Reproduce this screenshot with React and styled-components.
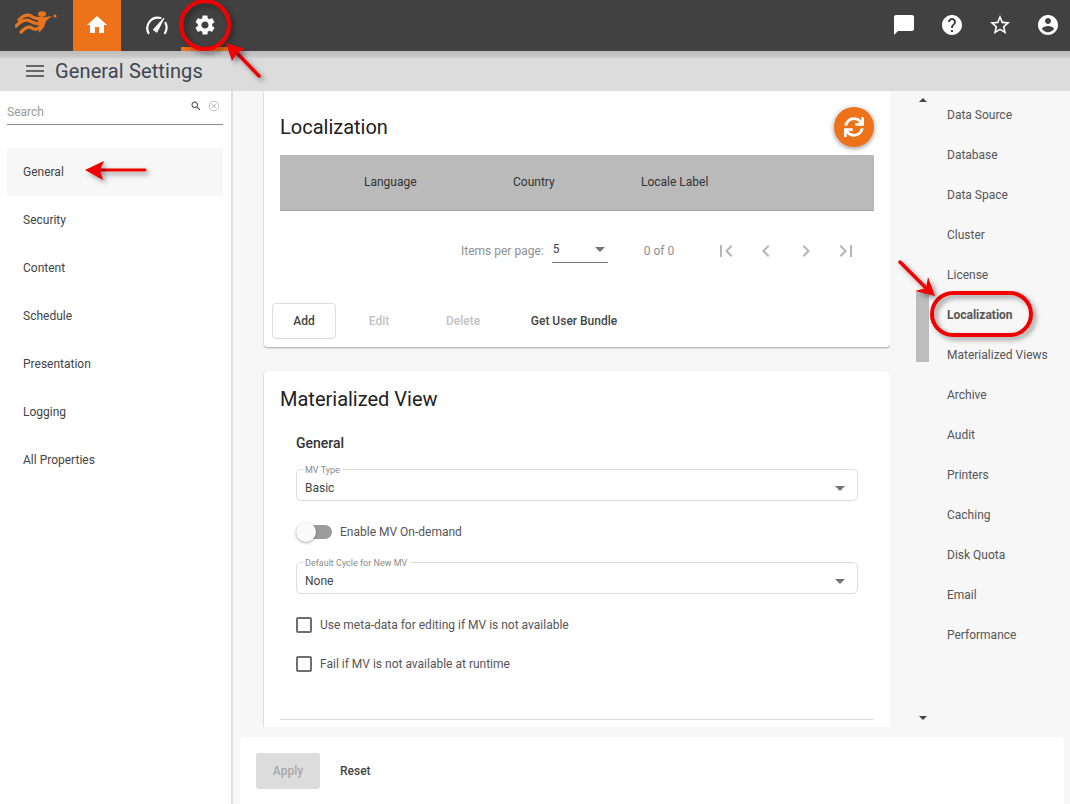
import React from 'react'
import styled, { createGlobalStyle } from 'styled-components'
import { FaSync } from 'react-icons/fa'

const GlobalStyle = createGlobalStyle`
  html, body {
    margin: 0;
    padding: 0;
    height: 100%;
    overflow: hidden;
    background: #f7f7f7;
    font-family: Roboto, "Liberation Sans", sans-serif;
  }
`

const Page = styled.div`
  position: relative;
  width: 1070px;
  height: 804px;
  display: flex;
  flex-direction: column;
  overflow: hidden;
`

const Header = styled.header`
  height: 51px;
  flex: none;
  background: #414141;
  display: flex;
  align-items: stretch;
`

const Logo = styled.div`
  width: 73px;
  display: flex;
  align-items: center;
  padding-left: 15px;
  box-sizing: border-box;
`

const Tab = styled.div`
  width: 48px;
  display: flex;
  align-items: center;
  justify-content: center;
  background: ${p => (p.$active ? '#ee7219' : 'transparent')};
  border-bottom: ${p => (p.$underline ? '4px solid #ee7219' : 'none')};
  box-sizing: border-box;
  padding-top: ${p => (p.$underline ? '3px' : '0')};
  padding-bottom: ${p => (p.$underline ? '0' : '1px')};
  margin-left: ${p => p.$gap || 0}px;
`

const HeaderRight = styled.div`
  margin-left: auto;
  margin-right: -2px;
  display: flex;
  align-items: center;
`

const HeaderIcon = styled.div`
  width: 48px;
  height: 48px;
  display: flex;
  align-items: center;
  justify-content: center;
  margin-top: -1px;
`

const TitleBar = styled.div`
  height: 40px;
  flex: none;
  background: linear-gradient(#bcbcbc, #c6c6c6 5px, #d2d2d2 7px, #dcdcdc 8px);
  display: flex;
  align-items: center;
  padding-left: 23px;
  gap: 8px;
`

const Title = styled.h1`
  margin: 0;
  font-size: 20px;
  font-weight: 400;
  letter-spacing: 0.12px;
  color: #3f4650;
`

const Body = styled.div`
  flex: 1;
  min-height: 0;
  display: flex;
`

const Sidebar = styled.aside`
  width: 233px;
  flex: none;
  box-sizing: border-box;
  background: #fff;
  border-right: 2px solid #e0e0e0;
  padding: 0 8px 0 7px;
`

const SearchBox = styled.div`
  height: 34px;
  box-sizing: border-box;
  border-bottom: 1px solid #8c8c8c;
  display: flex;
  align-items: flex-start;
`

const SearchText = styled.span`
  font-size: 12px;
  color: #9a9a9a;
  margin-top: 14px;
  flex: 1;
`

const SearchIcons = styled.div`
  display: flex;
  align-items: center;
  gap: 6px;
  margin-top: 9px;
  margin-right: 3px;
`

const SideList = styled.div`
  margin-top: 23px;
`

const SideItem = styled.div`
  height: 48px;
  display: flex;
  align-items: center;
  padding-left: 16px;
  font-size: 12px;
  color: #444;
  background: ${p => (p.$active ? '#f7f7f7' : 'transparent')};
`

const Content = styled.div`
  flex: 1;
  min-width: 0;
  display: flex;
  flex-direction: column;
`

const TopRow = styled.div`
  height: 646px;
  flex: none;
  display: flex;
`

const Cards = styled.div`
  width: 657px;
  flex: none;
  box-sizing: border-box;
  padding-left: 31px;
  height: 636px;
  overflow: hidden;
`

const Card = styled.section`
  background: #fff;
  border-radius: ${p => (p.$round ? '4px' : '0 0 4px 4px')};
  box-shadow: 0 1px 2px rgba(0, 0, 0, 0.35);
  padding: 0 16px;
  margin-bottom: 24px;
  height: ${p => p.$height}px;
  box-sizing: border-box;
`

const CardHead = styled.div`
  height: ${p => p.$height}px;
  box-sizing: border-box;
  padding-top: ${p => p.$top || 0}px;
  display: flex;
  align-items: center;
  justify-content: space-between;
`

const CardTitle = styled.h2`
  margin: 0;
  font-size: 20px;
  font-weight: 400;
  color: #212121;
`

const Fab = styled.div`
  width: 40px;
  height: 40px;
  border-radius: 50%;
  background: #ee7219;
  color: #fff;
  display: flex;
  align-items: center;
  justify-content: center;
  box-shadow: 0 0 0 3px rgba(0, 0, 0, 0.04), 0 2px 5px rgba(0, 0, 0, 0.3);
`

const TableHead = styled.div`
  height: 56px;
  box-sizing: border-box;
  background: #bababa;
  border-bottom: 1px solid #a3a3a3;
  padding-bottom: 2px;
  display: grid;
  grid-template-columns: 84px 149px 128px 1fr;
  align-items: center;
  font-size: 12px;
  color: #333;
`

const Pager = styled.div`
  height: 80px;
  display: flex;
  align-items: center;
  font-size: 12px;
  color: #8f8f8f;
  padding-left: 181px;
`

const PageSelect = styled.div`
  width: 56px;
  height: 24px;
  margin-left: 8px;
  box-sizing: border-box;
  border-bottom: 1px solid #757575;
  display: flex;
  align-items: center;
  justify-content: space-between;
  color: #444;
  padding: 0 0 3px 1px;
`

const Caret = styled.span`
  width: 0;
  height: 0;
  border-left: 5px solid transparent;
  border-right: 5px solid transparent;
  border-top: 5px solid #757575;
  margin-right: ${p => p.$right || 0}px;
`

const Range = styled.span`
  margin-left: 36px;
  margin-right: 32px;
`

const PageButton = styled.div`
  width: 40px;
  height: 40px;
  display: flex;
  align-items: center;
  justify-content: center;
`

const ButtonRow = styled.div`
  display: flex;
  align-items: center;
  margin: 12px 0 0 -8px;
`

const TextButton = styled.div`
  height: 36px;
  box-sizing: border-box;
  display: flex;
  align-items: center;
  justify-content: center;
  font-size: 12px;
  font-weight: 500;
  width: ${p => p.$width}px;
  color: ${p => (p.$disabled ? '#c2c2c2' : '#444')};
  border: ${p => (p.$outlined ? '1px solid #dcdcdc' : 'none')};
  border-radius: 4px;
`

const Section = styled.div`
  padding: 8px 16px 0;
`

const SectionTitle = styled.h3`
  margin: 0;
  font-size: 14px;
  font-weight: 500;
  color: #333;
  line-height: 16px;
`

const Field = styled.div`
  position: relative;
  height: 32px;
  box-sizing: border-box;
  margin-top: ${p => p.$top}px;
  border: 1px solid #dcdcdc;
  border-radius: 5px;
  display: flex;
  align-items: center;
  justify-content: space-between;
  padding: 6px 12px 0 8px;
  font-size: 12px;
  color: #444;
`

const FieldLabel = styled.span`
  position: absolute;
  left: 6px;
  top: -5px;
  padding: 0 3px 0 2px;
  background: #fff;
  font-size: 9px;
  line-height: 10px;
  color: #8a8a8a;
`

const SwitchRow = styled.div`
  display: flex;
  align-items: center;
  margin-top: 20px;
  height: 22px;
  font-size: 12px;
  color: #555;
  gap: 8px;
`

const SwitchTrack = styled.span`
  position: relative;
  width: 36px;
  height: 14px;
  border-radius: 7px;
  background: #9b9b9b;
  display: block;
`

const SwitchKnob = styled.span`
  position: absolute;
  left: 0;
  top: -3px;
  width: 20px;
  height: 20px;
  border-radius: 50%;
  background: #fafafa;
  box-shadow: 0 1px 3px rgba(0, 0, 0, 0.35);
`

const CheckRow = styled.div`
  display: flex;
  align-items: center;
  gap: 8px;
  height: 20px;
  margin-top: ${p => p.$top}px;
  font-size: 12px;
  color: #555;
`

const CheckBox = styled.span`
  width: 16px;
  height: 16px;
  box-sizing: border-box;
  border: 2px solid #6e6e6e;
  border-radius: 2px;
  display: block;
`

const Divider = styled.div`
  height: 1px;
  background: #dcdcdc;
  margin-top: 45px;
`

const RightNav = styled.nav`
  flex: 1;
  display: flex;
`

const Track = styled.div`
  width: 13px;
  margin-left: 26px;
  display: flex;
  flex-direction: column;
  align-items: center;
  position: relative;
`

const Thumb = styled.div`
  width: 13px;
  height: 70px;
  background: #bdbdbd;
  margin-top: 201px;
`

const Arrow = styled.span`
  position: absolute;
  left: 3px;
  top: ${p => p.$top}px;
  width: 0;
  height: 0;
  border-left: 4px solid transparent;
  border-right: 4px solid transparent;
  ${p => (p.$up ? 'border-bottom: 4px solid #444;' : 'border-top: 4px solid #444;')}
`

const NavList = styled.div`
  margin: 4px 0 0 18px;
`

const NavItem = styled.div`
  height: 40px;
  display: flex;
  align-items: center;
  font-size: 12px;
  color: #555;
  font-weight: ${p => (p.$active ? 700 : 400)};
  white-space: nowrap;
`

const Footer = styled.footer`
  height: 67px;
  flex: none;
  background: #fff;
  margin: 0 6px 0 7px;
  border-radius: 4px 4px 0 0;
  display: flex;
  align-items: center;
  padding-left: 16px;
  gap: 20px;
`

const ApplyButton = styled.div`
  width: 64px;
  height: 36px;
  border-radius: 3px;
  background: #dcdcdc;
  color: #a8a8a8;
  font-size: 12px;
  font-weight: 500;
  display: flex;
  align-items: center;
  justify-content: center;
`

const ResetText = styled.span`
  font-size: 12px;
  font-weight: 500;
  color: #444;
`

const Overlay = styled.svg`
  position: absolute;
  left: 0;
  top: 0;
  z-index: 5;
  pointer-events: none;
`

const MaterialIcon = ({ d, size = 24, color = '#fff' }) => (
  <svg width={size} height={size} viewBox="0 0 24 24" fill={color}>
    <path d={d} />
  </svg>
)

const icons = {
  home: 'M10 20v-6h4v6h5v-8h3L12 3 2 12h3v8z',
  gear: 'M19.14 12.94c.04-.3.06-.61.06-.94 0-.32-.02-.64-.07-.94l2.03-1.58c.18-.14.23-.41.12-.61l-1.92-3.32c-.12-.22-.37-.29-.59-.22l-2.39.96c-.5-.38-1.03-.7-1.62-.94l-.36-2.54c-.04-.24-.24-.41-.48-.41h-3.84c-.24 0-.43.17-.47.41l-.36 2.54c-.59.24-1.13.57-1.62.94l-2.39-.96c-.22-.08-.47 0-.59.22L2.74 8.87c-.12.21-.08.47.12.61l2.03 1.58c-.05.3-.09.63-.09.94s.02.64.07.94l-2.03 1.58c-.18.14-.23.41-.12.61l1.92 3.32c.12.22.37.29.59.22l2.39-.96c.5.38 1.03.7 1.62.94l.36 2.54c.05.24.24.41.48.41h3.84c.24 0 .44-.17.47-.41l.36-2.54c.59-.24 1.13-.56 1.62-.94l2.39.96c.22.08.47 0 .59-.22l1.92-3.32c.12-.22.07-.47-.12-.61l-2.01-1.58zM12 15.6c-1.98 0-3.6-1.62-3.6-3.6s1.62-3.6 3.6-3.6 3.6 1.62 3.6 3.6-1.62 3.6-3.6 3.6z',
  chat: 'M20 2H4c-1.1 0-1.99.9-1.99 2L2 22l4-4h14c1.1 0 2-.9 2-2V4c0-1.1-.9-2-2-2z',
  help: 'M12 2C6.48 2 2 6.48 2 12s4.48 10 10 10 10-4.48 10-10S17.52 2 12 2zm1 17h-2v-2h2v2zm2.07-7.75l-.9.92C13.45 12.9 13 13.5 13 15h-2v-.5c0-1.1.45-2.1 1.17-2.83l1.24-1.26c.37-.36.59-.86.59-1.41 0-1.1-.9-2-2-2s-2 .9-2 2H8c0-2.21 1.79-4 4-4s4 1.79 4 4c0 .88-.36 1.68-.93 2.25z',
  star: 'M22 9.24l-7.19-.62L12 2 9.19 8.63 2 9.24l5.46 4.73L5.82 21 12 17.27 18.18 21l-1.63-7.03L22 9.24zM12 15.4l-3.76 2.27 1-4.28-3.32-2.88 4.38-.38L12 6.1l1.71 4.04 4.38.38-3.32 2.88 1 4.28L12 15.4z',
  account: 'M12 2C6.48 2 2 6.48 2 12s4.48 10 10 10 10-4.48 10-10S17.52 2 12 2zm0 3c1.66 0 3 1.34 3 3s-1.34 3-3 3-3-1.34-3-3 1.34-3 3-3zm0 14.2c-2.5 0-4.71-1.28-6-3.22.03-1.99 4-3.08 6-3.08 1.99 0 5.97 1.09 6 3.08-1.29 1.94-3.5 3.22-6 3.22z',
  first: 'M18.41 16.59L13.82 12l4.59-4.59L17 6l-6 6 6 6zM6 6h2v12H6z',
  prev: 'M15.41 7.41L14 6l-6 6 6 6 1.41-1.41L10.83 12z',
  next: 'M10 6L8.59 7.41 13.17 12l-4.58 4.59L10 18l6-6z',
  last: 'M5.59 7.41L10.18 12l-4.59 4.59L7 18l6-6-6-6zM16 6h2v12h-2z',
  menu: 'M3 18h18v-2H3v2zm0-5h18v-2H3v2zm0-7v2h18V6H3z',
  search: 'M15.5 14h-.79l-.28-.27C15.41 12.59 16 11.11 16 9.5 16 5.91 13.09 3 9.5 3S3 5.91 3 9.5 5.91 16 9.5 16c1.61 0 3.09-.59 4.23-1.57l.27.28v.79l5 4.99L20.49 19l-4.99-5zm-6 0C7.01 14 5 11.99 5 9.5S7.01 5 9.5 5 14 7.01 14 9.5 11.99 14 9.5 14z',
}

const BrandLogo = () => (
  <svg width="44" height="30" viewBox="0 0 44 30" fill="none" stroke="#e8741e" strokeLinecap="round">
    <path d="M4 9C8 5 12 3 16 5S22 9 26 7" strokeWidth="3.2" />
    <path d="M1 15C6 10 11 8 15 10S22 14 26 11" strokeWidth="3.2" />
    <path d="M6 21C10 17 14 15 17 17S22 19 26 15" strokeWidth="3.2" />
    <path d="M23 7L37 5 31 10 29 16 24 22z" fill="#e8741e" stroke="none" />
    <ellipse cx="27" cy="3" rx="4" ry="2.8" fill="#e8741e" stroke="none" />
    <circle cx="40" cy="5" r="1.6" fill="#e8741e" stroke="none" />
  </svg>
)

const GaugeIcon = () => (
  <svg width="24" height="24" viewBox="0 0 24 24" fill="none" stroke="#fff" strokeLinecap="round">
    <path d="M3.5 20A10.5 10.5 0 0 1 15.5 5" strokeWidth="2.2" />
    <path d="M20.5 10A10.5 10.5 0 0 1 20 20" strokeWidth="2.2" />
    <path d="M8.5 16.5L19 5 12 19z" fill="#fff" strokeWidth="1" strokeLinejoin="round" />
  </svg>
)

const ClearIcon = () => (
  <svg width="12" height="12" viewBox="0 0 12 12" fill="none" stroke="#bdbdbd">
    <circle cx="6" cy="6" r="4.7" />
    <path d="M4 4l4 4M8 4l-4 4" />
  </svg>
)

const Annotations = () => (
  <Overlay width="1070" height="804" viewBox="0 0 1070 804">
    <defs>
      <filter id="sh" x="-30%" y="-30%" width="170%" height="170%">
        <feDropShadow dx="3" dy="3" stdDeviation="2.5" floodColor="#000" floodOpacity="0.4" />
      </filter>
    </defs>
    <g filter="url(#sh)" fill="none" stroke="#f00000" strokeLinecap="round">
      <circle cx="205" cy="25" r="24" strokeWidth="4" />
      <rect x="932" y="293" width="99" height="42" rx="21" strokeWidth="4" />
      <path d="M259 76L236 52" strokeWidth="3.5" />
      <path d="M145 170H100" strokeWidth="3" />
      <path d="M900 262L925 287" strokeWidth="3.5" />
    </g>
    <g filter="url(#sh)" fill="#f00000">
      <path d="M226 43L245 49 237 53 232 61z" />
      <path d="M85 170L104 161 100 170 103 180z" />
      <path d="M935 296L928 277 926 288 915 291z" />
    </g>
  </Overlay>
)

const sideItems = ['General', 'Security', 'Content', 'Schedule', 'Presentation', 'Logging', 'All Properties']
const navItems = ['Data Source', 'Database', 'Data Space', 'Cluster', 'License', 'Localization', 'Materialized Views', 'Archive', 'Audit', 'Printers', 'Caching', 'Disk Quota', 'Email', 'Performance']

const App = () => (
  <Page>
    <GlobalStyle />
    <Header>
      <Logo><BrandLogo /></Logo>
      <Tab $active><MaterialIcon d={icons.home} /></Tab>
      <Tab $gap={12}><GaugeIcon /></Tab>
      <Tab $underline><MaterialIcon d={icons.gear} /></Tab>
      <HeaderRight>
        <HeaderIcon><MaterialIcon d={icons.chat} /></HeaderIcon>
        <HeaderIcon><MaterialIcon d={icons.help} /></HeaderIcon>
        <HeaderIcon><MaterialIcon d={icons.star} /></HeaderIcon>
        <HeaderIcon><MaterialIcon d={icons.account} /></HeaderIcon>
      </HeaderRight>
    </Header>
    <TitleBar>
      <MaterialIcon d={icons.menu} color="#666" />
      <Title>General Settings</Title>
    </TitleBar>
    <Body>
      <Sidebar>
        <SearchBox>
          <SearchText>Search</SearchText>
          <SearchIcons>
            <MaterialIcon d={icons.search} size={12} color="#444" />
            <ClearIcon />
          </SearchIcons>
        </SearchBox>
        <SideList>
          {sideItems.map((s, i) => <SideItem key={s} $active={i === 0}>{s}</SideItem>)}
        </SideList>
      </Sidebar>
      <Content>
        <TopRow>
          <Cards>
            <Card $height={256}>
              <CardHead $height={64} $top={8}>
                <CardTitle>Localization</CardTitle>
                <Fab><FaSync size={20} /></Fab>
              </CardHead>
              <TableHead>
                <span />
                <span>Language</span>
                <span>Country</span>
                <span>Locale Label</span>
              </TableHead>
              <Pager>
                <span>Items per page:</span>
                <PageSelect>5<Caret $right={3} /></PageSelect>
                <Range>0 of 0</Range>
                <PageButton><MaterialIcon d={icons.first} color="#b5b5b5" /></PageButton>
                <PageButton><MaterialIcon d={icons.prev} color="#b5b5b5" /></PageButton>
                <PageButton><MaterialIcon d={icons.next} color="#b5b5b5" /></PageButton>
                <PageButton><MaterialIcon d={icons.last} color="#b5b5b5" /></PageButton>
              </Pager>
              <ButtonRow>
                <TextButton $outlined $width={64}>Add</TextButton>
                <TextButton $disabled $width={86}>Edit</TextButton>
                <TextButton $disabled $width={82}>Delete</TextButton>
                <TextButton $width={140}>Get User Bundle</TextButton>
              </ButtonRow>
            </Card>
            <Card $height={400} $round>
              <CardHead $height={56}>
                <CardTitle>Materialized View</CardTitle>
              </CardHead>
              <Section>
                <SectionTitle>General</SectionTitle>
                <Field $top={18}>
                  <FieldLabel>MV Type</FieldLabel>
                  Basic
                  <Caret />
                </Field>
                <SwitchRow>
                  <SwitchTrack><SwitchKnob /></SwitchTrack>
                  Enable MV On-demand
                </SwitchRow>
                <Field $top={19}>
                  <FieldLabel>Default Cycle for New MV</FieldLabel>
                  None
                  <Caret />
                </Field>
                <CheckRow $top={21}><CheckBox />Use meta-data for editing if MV is not available</CheckRow>
                <CheckRow $top={19}><CheckBox />Fail if MV is not available at runtime</CheckRow>
              </Section>
              <Divider />
            </Card>
          </Cards>
          <RightNav>
            <Track>
              <Arrow $up $top={7} />
              <Thumb />
              <Arrow $top={625} />
            </Track>
            <NavList>
              {navItems.map(n => <NavItem key={n} $active={n === 'Localization'}>{n}</NavItem>)}
            </NavList>
          </RightNav>
        </TopRow>
        <Footer>
          <ApplyButton>Apply</ApplyButton>
          <ResetText>Reset</ResetText>
        </Footer>
      </Content>
    </Body>
    <Annotations />
  </Page>
)

export default App
